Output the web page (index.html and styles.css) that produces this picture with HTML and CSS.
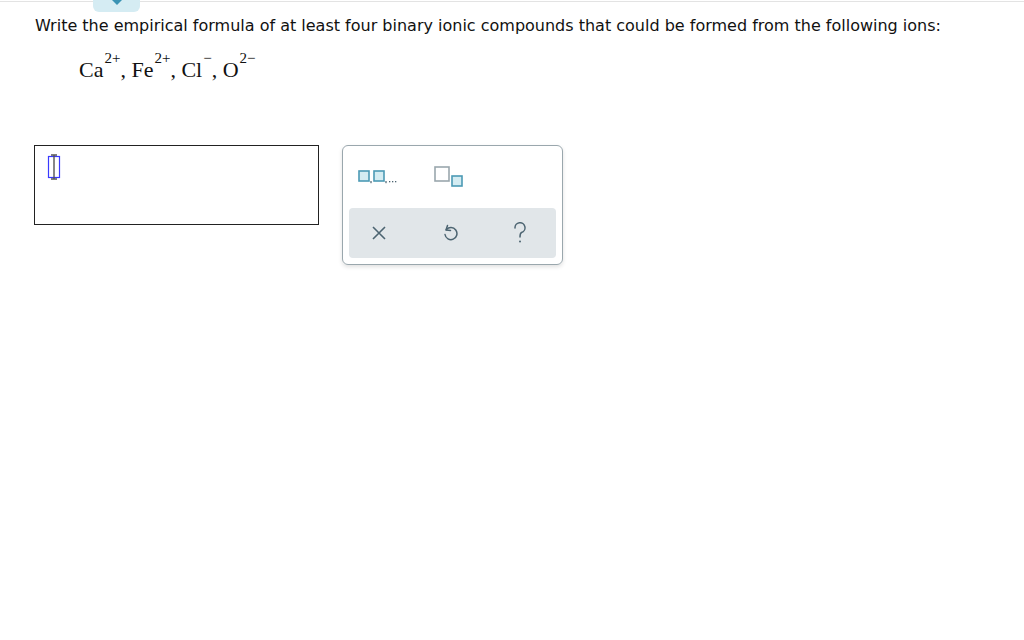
FILE: index.html
```html
<!DOCTYPE html>
<html>
<head>
<meta charset="utf-8">
<link rel="stylesheet" href="styles.css">
</head>
<body>
<div class="topline"></div>
<div class="tab"><svg width="14" height="6" viewBox="0 0 14 6"><path d="M2 0 L12 0 L7 5 Z" fill="#3a93b4"/></svg></div>
<div class="content">
  <p class="question">Write the empirical formula of at least four binary ionic compounds that could be formed from the following ions:</p>
  <div class="ions"><span>Ca</span><span class="sup">2+</span><span>, Fe</span><span class="sup">2+</span><span>, Cl</span><span class="sup">&minus;</span><span>, O</span><span class="sup">2&minus;</span></div>
  <div class="work">
    <div class="answer">
      <svg class="cursor" width="14" height="26" viewBox="0 0 14 26">
        <rect x="1.5" y="2.5" width="11" height="21" fill="none" stroke="#3a3aff" stroke-width="1.2"/>
        <path d="M4 1 H10 M7 1 V25 M4 25 H10" stroke="#555" stroke-width="1.4" fill="none"/>
      </svg>
    </div>
    <div class="pad">
      <div class="pad-top">
        <svg class="ico-list" width="42" height="16" viewBox="0 0 42 16">
          <rect x="1" y="1" width="10" height="10" fill="#d4ecf2" stroke="#4b9ab5" stroke-width="1.6"/>
          <rect x="12.4" y="11" width="1.2" height="2.2" fill="#4c6471"/>
          <rect x="16" y="1" width="10" height="10" fill="#d4ecf2" stroke="#4b9ab5" stroke-width="1.6"/>
          <rect x="27.4" y="11" width="1.2" height="2.2" fill="#4c6471"/>
          <rect x="31" y="11" width="1.3" height="1.3" fill="#4c6471"/>
          <rect x="34" y="11" width="1.3" height="1.3" fill="#4c6471"/>
          <rect x="37" y="11" width="1.3" height="1.3" fill="#4c6471"/>
        </svg>
        <svg class="ico-sub" width="30" height="22" viewBox="0 0 30 22">
          <rect x="1" y="1" width="14" height="14" fill="#fff" stroke="#9aa7ad" stroke-width="1.6"/>
          <rect x="18" y="10" width="10" height="10" fill="#d4ecf2" stroke="#4b9ab5" stroke-width="1.6"/>
        </svg>
      </div>
      <div class="pad-bottom">
        <svg width="16" height="16" viewBox="0 0 16 16"><path d="M2 2 L14 14 M14 2 L2 14" stroke="#4c6471" stroke-width="1.6" fill="none"/></svg>
        <svg width="16" height="20" viewBox="0 0 16 20"><path d="M5.5 2.5 L4 7 L8.5 7.5" stroke="#4c6471" stroke-width="1.5" fill="none" stroke-linejoin="round" stroke-linecap="round"/><path d="M4.3 6.8 A6 6 0 1 1 3 11.5" stroke="#4c6471" stroke-width="1.5" fill="none" stroke-linecap="round"/></svg>
        <svg width="16" height="22" viewBox="0 0 16 22"><path d="M3 6 A5 5 0 1 1 9.5 10.5 C8 11.3 8 12.5 8 15" stroke="#4c6471" stroke-width="1.5" fill="none" stroke-linecap="round"/><circle cx="8" cy="19.5" r="1" fill="#4c6471"/></svg>
      </div>
    </div>
  </div>
</div>
</body>
</html>
```
FILE: styles.css
```css
html, body {
  margin: 0;
  padding: 0;
  background: #fff;
}
body {
  width: 1024px;
  height: 640px;
  overflow: hidden;
  position: relative;
  font-family: "DejaVu Sans", Verdana, sans-serif;
  color: #111;
}
.topline {
  height: 1px;
  background: #e3e3e3;
  margin-top: 1px;
}
.tab {
  position: absolute;
  left: 93px;
  top: 0;
  width: 47px;
  height: 12px;
  background: #d5ecf3;
  border-radius: 0 0 6px 6px;
  display: flex;
  justify-content: center;
  align-items: flex-start;
}
.content {
  padding: 0 0 0 34px;
}
.question {
  margin: 14px 0 0 1px;
  font-size: 16px;
  line-height: 20px;
}
.ions {
  margin: 21px 0 0 45px;
  font-family: "Liberation Serif", "Times New Roman", serif;
  font-size: 22px;
  line-height: 26px;
  height: 26px;
  white-space: pre;
}
.ions .sup {
  display: inline-block;
  font-size: 15px;
  line-height: 3px;
  vertical-align: 14px;
  margin-left: 1px;
}
.work {
  display: flex;
  align-items: flex-start;
  margin-top: 62px;
  gap: 23px;
}
.answer {
  width: 283px;
  height: 78px;
  border: 1px solid #222;
}
.cursor {
  display: block;
  margin: 8px 0 0 12px;
}
.pad {
  width: 221px;
  border: 1px solid #9aa7ad;
  border-radius: 6px;
  box-shadow: 0 2px 4px rgba(0,0,0,0.12);
  padding: 0 6px 6px 6px;
  box-sizing: border-box;
}
.pad-top {
  height: 62px;
  display: flex;
  align-items: flex-start;
  padding-left: 9px;
  gap: 34px;
}
.ico-list { margin-top: 24px; }
.ico-sub { margin-top: 20px; }
.pad-bottom {
  height: 50px;
  background: #e1e6e9;
  border-radius: 4px;
  display: flex;
  align-items: center;
  justify-content: space-between;
  padding: 0 28px 0 22px;
}
```
